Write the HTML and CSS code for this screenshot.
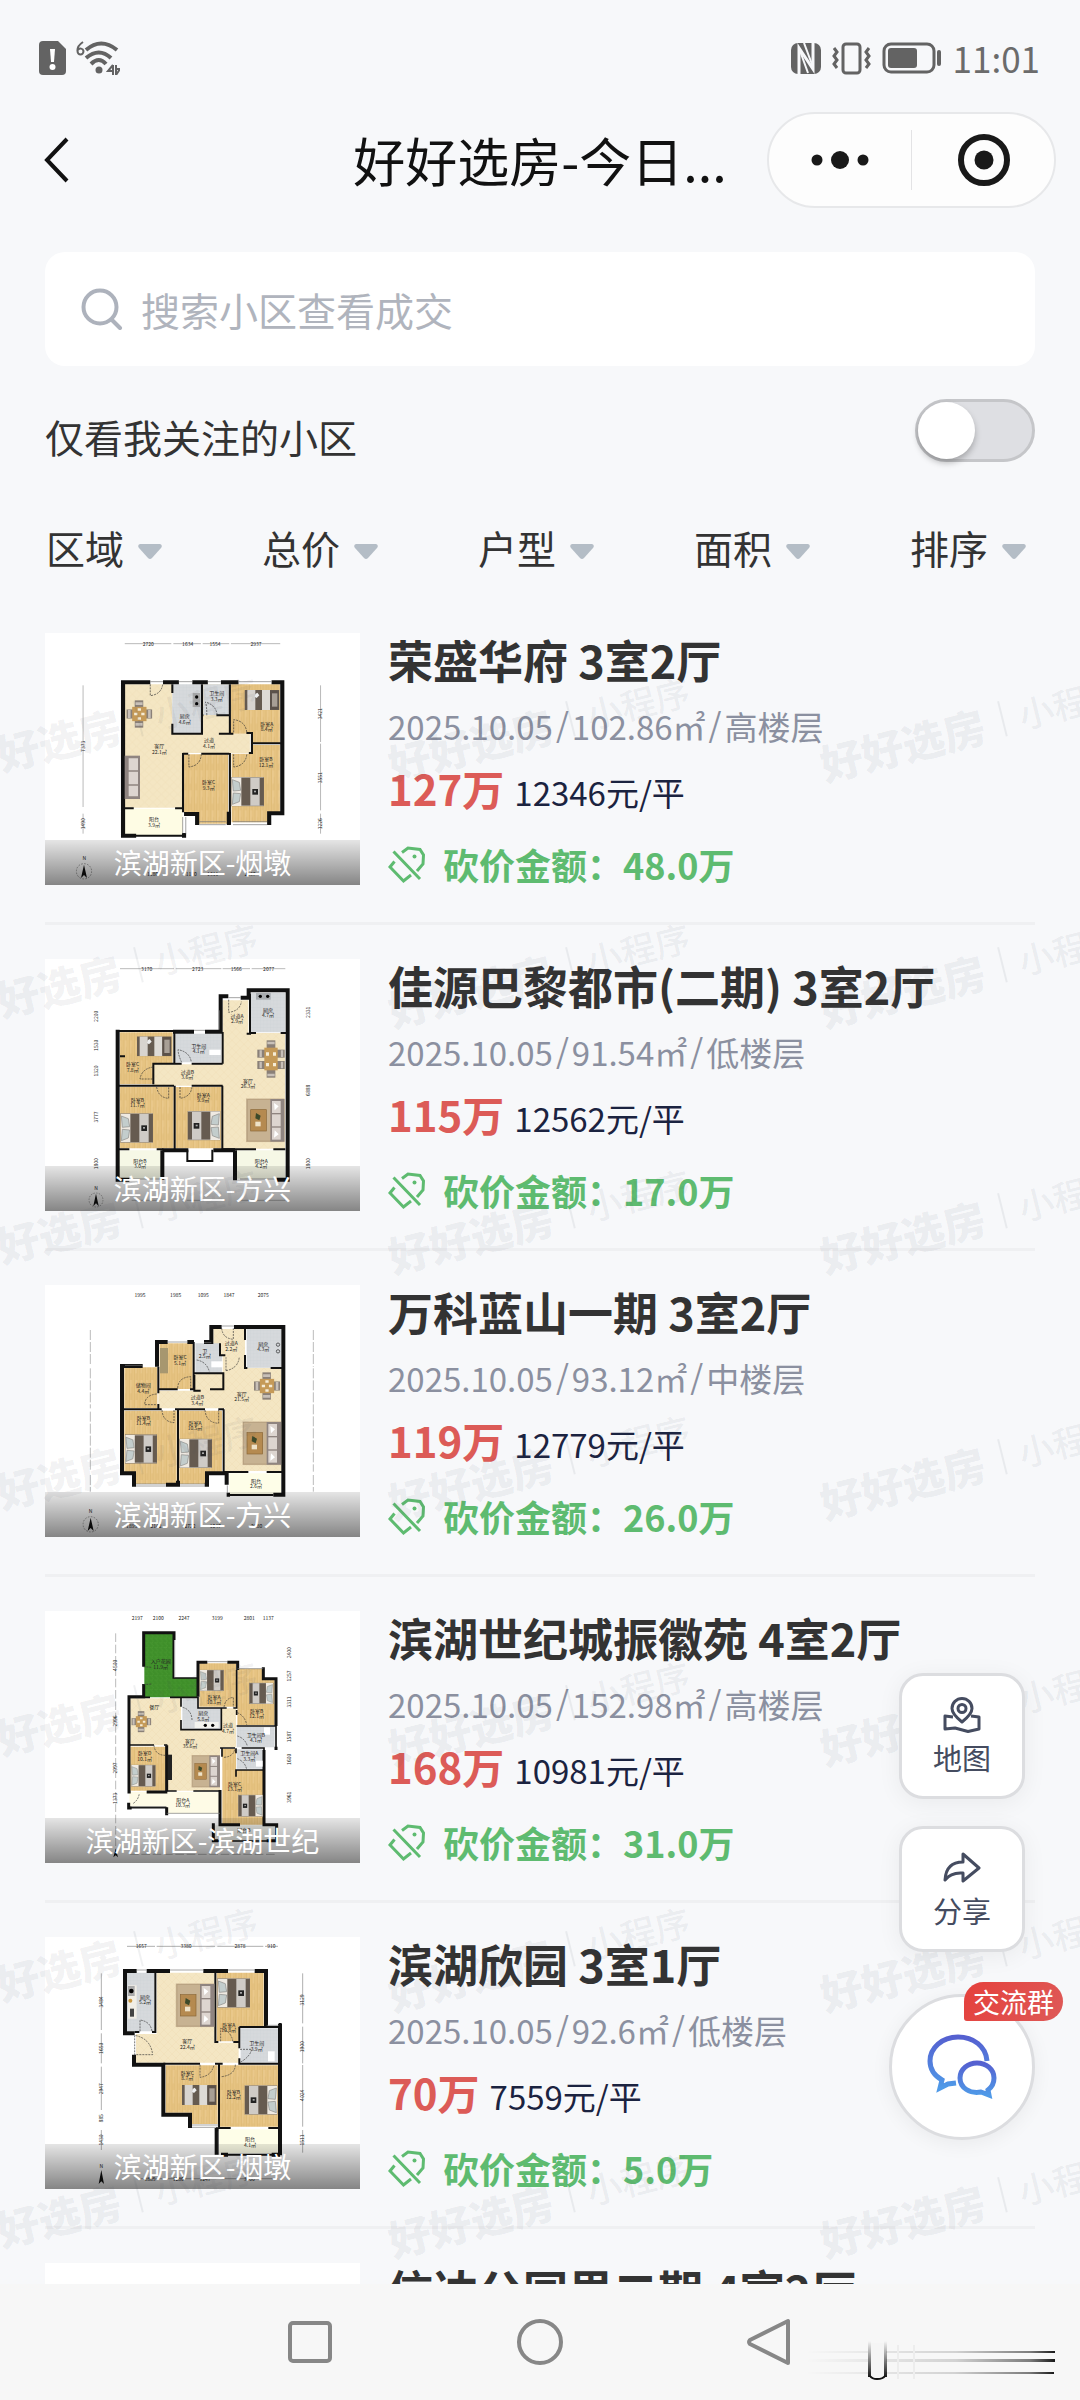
FILE: index.html
```html
<!DOCTYPE html>
<html lang="zh-CN">
<head>
<meta charset="utf-8">
<meta name="viewport" content="width=device-width, initial-scale=1">
<title>好好选房-今日成交</title>
<link rel="stylesheet" href="styles.css">
</head>
<body>
<svg class="defs" width="0" height="0" aria-hidden="true">
  <defs>
    <pattern id="wood" width="16" height="60" patternUnits="userSpaceOnUse"><rect width="16" height="60" fill="#e6c382"/><path d="M4 0V60M11 20V60" stroke="#dab36d" stroke-width="1.5"/><path d="M8 0V40" stroke="#f0d29a" stroke-width="2"/></pattern>
    <pattern id="tile" width="24" height="24" patternUnits="userSpaceOnUse"><rect width="24" height="24" fill="#f4e6c3"/><path d="M0 12L12 0L24 12L12 24Z" fill="none" stroke="#ecdab0" stroke-width="1"/></pattern>
    <pattern id="stone" width="10" height="10" patternUnits="userSpaceOnUse"><rect width="10" height="10" fill="#d6d9dc"/><path d="M0 0H10M0 0V10" stroke="#cbced2" stroke-width="1"/></pattern>
    <pattern id="grass" width="14" height="14" patternUnits="userSpaceOnUse"><rect width="14" height="14" fill="#3f8f2a"/><path d="M2 3L6 7M8 9L12 13M10 2L8 6" stroke="#54a53b" stroke-width="1.5"/></pattern>
    <linearGradient id="chatGrad" x1="0" y1="0" x2="0" y2="1"><stop offset="0" stop-color="#5560d0"/><stop offset="1" stop-color="#4f9ae8"/></linearGradient>
    <linearGradient id="trail" x1="0" y1="0" x2="1" y2="0"><stop offset="0" stop-color="#000" stop-opacity="0"/><stop offset=".6" stop-color="#000" stop-opacity=".15"/><stop offset=".9" stop-color="#000" stop-opacity=".5"/><stop offset="1" stop-color="#000" stop-opacity=".9"/></linearGradient>
    <linearGradient id="post" x1="0" y1="0" x2="0" y2="1"><stop offset="0" stop-color="#000" stop-opacity="0"/><stop offset="1" stop-color="#000" stop-opacity=".9"/></linearGradient>
    <symbol id="bed" viewBox="0 0 98 88"><rect width="98" height="88" fill="#efeae2"/><rect x="30" y="2" width="68" height="84" fill="#665b50"/><rect x="57" y="2" width="28" height="84" fill="#cfcbc6"/><path d="M3 8L24 16L28 40L6 42ZM3 82L24 74L28 50L6 48Z" fill="#c3cdcc" stroke="#8b8a86" stroke-width="2"/><rect x="63" y="36" width="17" height="17" fill="#222"/><rect x="68" y="41" width="6" height="5" fill="#aaa"/><rect width="98" height="88" fill="none" stroke="#75695a" stroke-width="2"/></symbol>
    <symbol id="bedS" viewBox="0 0 104 60"><rect width="104" height="60" fill="#665b50"/><rect x="8" width="24" height="60" fill="#d8d4cf"/><rect x="52" width="24" height="60" fill="#dedbd6"/><rect x="76" y="2" width="26" height="56" fill="#5b5149"/><rect x="82" y="10" width="16" height="40" fill="#a89f95"/><path d="M32 12l6-4 6 8-8 8-6-4z" fill="#eee"/></symbol>
    <symbol id="dining" viewBox="0 0 80 84"><rect x="26" width="26" height="84" fill="#8a8078"/><rect y="28" width="80" height="28" fill="#8a8078"/><path d="M28 10h22M28 74h22M9 30v24M71 30v24" stroke="#c8c0b8" stroke-width="8"/><rect x="18" y="20" width="44" height="44" fill="#c59a58"/><path d="M24 38h10v8H24zM46 38h10v8H46zM35 24h10v8H35zM35 52h10v8H35z" fill="#f5ecd6"/></symbol>
    <symbol id="lounge" viewBox="0 0 116 132"><rect width="116" height="132" fill="#c7b292"/><rect x="4" y="4" width="100" height="124" fill="none" stroke="#b39c7b" stroke-width="2"/><rect x="14" y="34" width="47" height="64" fill="#b58a50" stroke="#8a6637" stroke-width="2"/><path d="M30 44l14 8-4 14-12-6z" fill="#3d4a2a"/><rect x="28" y="70" width="16" height="14" fill="#eee2c8"/><rect x="73" y="2" width="43" height="128" fill="#8f8480"/><rect x="78" y="8" width="26" height="36" fill="#ddd5d0"/><rect x="78" y="48" width="26" height="36" fill="#ddd5d0"/><rect x="78" y="88" width="26" height="36" fill="#ddd5d0"/><path d="M84 14l14 10-12 12zM84 118l14-10-12-12z" fill="#fff"/></symbol>
    <symbol id="compass" viewBox="0 0 50 50"><circle cx="25" cy="25" r="23" fill="none" stroke="#777" stroke-width="2" stroke-dasharray="5 4"/><path d="M25 5L34 45L25 36L16 45Z" fill="#111"/></symbol>
    <symbol id="tag" viewBox="0 0 37 37"><g fill="none" stroke="currentColor" stroke-width="3"><path d="M14 6.500L20 2L32 3.500L35.500 9L35 18L29 25M6.500 15.500L2 21L15.500 35L23 29M5.500 5.500L32 33"/></g><circle cx="26.500" cy="10.500" r="2" fill="currentColor"/></symbol>
  </defs>
</svg>

<div class="app">
  <div class="status">
    <div class="status-group">
      <svg width="27" height="34" viewBox="0 0 27 34" aria-hidden="true"><path d="M4 0H19L27 8V30a4 4 0 0 1-4 4H4a4 4 0 0 1-4-4V4a4 4 0 0 1 4-4z" fill="#636363"/><path d="M11 8h5l-1 13h-3z" fill="#fff"/><circle cx="13.500" cy="26" r="3" fill="#fff"/></svg>
      <svg class="wifi" width="44" height="34" viewBox="0 0 44 34" aria-hidden="true"><path d="M7 1Q1 5 1.500 10a3 3.500 0 1 0 6 0a3 3 0 0 0-5.500-1" fill="none" stroke="#636363" stroke-width="2"/><g fill="none" stroke="#636363" stroke-width="4"><path d="M10 9Q25-4 41 9"/><path d="M10 17Q23 6 35 17"/><path d="M15 23Q23 15 30 23"/></g><circle cx="23" cy="29" r="3.500" fill="#636363"/><path d="M37 24v10M37 24l-5 6h5M40 24v10l4-6h-4" fill="none" stroke="#636363" stroke-width="2"/></svg>
    </div>
    <div class="status-group">
      <svg width="30" height="31" viewBox="0 0 30 31" aria-hidden="true"><rect width="30" height="31" rx="7" fill="#636363"/><path d="M8 31V5L22 26V0" fill="none" stroke="#f7f8fa" stroke-width="3"/><path d="M8 5L17 30M13 0L22 24" stroke="#f7f8fa" stroke-width="2"/></svg>
      <svg class="vibrate" width="39" height="33" viewBox="0 0 39 33" aria-hidden="true"><g fill="none" stroke="#636363" stroke-width="3"><rect x="11" y="2" width="17" height="29" rx="3"/><path d="M2 6l3 4-3 4 3 4-3 4 3 4M37 6l-3 4 3 4-3 4 3 4-3 4"/></g></svg>
      <svg class="battery" width="60" height="32" viewBox="0 0 60 32" aria-hidden="true"><rect x="2" y="2" width="50" height="28" rx="7" fill="none" stroke="#636363" stroke-width="3"/><rect x="6" y="6" width="29" height="20" rx="3" fill="#636363"/><path d="M57 10V22" stroke="#636363" stroke-width="4" stroke-linecap="round"/></svg>
      <span class="clock">11:01</span>
    </div>
  </div>

  <header class="header">
    <button class="back" type="button" aria-label="返回"><svg width="26" height="46" viewBox="0 0 26 46" aria-hidden="true"><path d="M23 2L3 23L23 44" fill="none" stroke="#111" stroke-width="4"/></svg></button>
    <h1 class="title">好好选房-今日...</h1>
    <div class="capsule">
      <button type="button" aria-label="更多"><svg width="60" height="60" viewBox="0 0 60 60" aria-hidden="true"><g fill="#191919"><circle cx="7" cy="30" r="5.500"/><circle cx="30" cy="30" r="9"/><circle cx="53" cy="30" r="5.500"/></g></svg></button>
      <button type="button" aria-label="关闭"><svg width="60" height="60" viewBox="0 0 60 60" aria-hidden="true"><circle cx="31" cy="30" r="23" fill="none" stroke="#191919" stroke-width="6"/><circle cx="31" cy="30" r="9.500" fill="#191919"/></svg></button>
    </div>
  </header>

  <section class="tools">
    <label class="search">
      <svg width="42" height="42" viewBox="0 0 42 42" aria-hidden="true"><circle cx="19" cy="19" r="16.500" fill="none" stroke="#adb2bc" stroke-width="4"/><path d="M31 32L39 40" stroke="#adb2bc" stroke-width="4" stroke-linecap="round"/></svg>
      <input type="text" placeholder="搜索小区查看成交" aria-label="搜索小区查看成交">
    </label>
    <div class="follow">
      <label for="follow">仅看我关注的小区</label>
      <input class="switch" id="follow" type="checkbox">
    </div>
  </section>

  <div class="filters">
    <label class="filter"><select aria-label="区域"><option>区域</option></select><svg width="24" height="15" viewBox="0 0 24 15" aria-hidden="true"><path d="M2 0H22Q25 1 23 4L14 14Q12 16 10 14L1 4Q-1 1 2 0Z" fill="#b4bdc6"/></svg></label>
    <label class="filter"><select aria-label="总价"><option>总价</option></select><svg width="24" height="15" viewBox="0 0 24 15" aria-hidden="true"><path d="M2 0H22Q25 1 23 4L14 14Q12 16 10 14L1 4Q-1 1 2 0Z" fill="#b4bdc6"/></svg></label>
    <label class="filter"><select aria-label="户型"><option>户型</option></select><svg width="24" height="15" viewBox="0 0 24 15" aria-hidden="true"><path d="M2 0H22Q25 1 23 4L14 14Q12 16 10 14L1 4Q-1 1 2 0Z" fill="#b4bdc6"/></svg></label>
    <label class="filter"><select aria-label="面积"><option>面积</option></select><svg width="24" height="15" viewBox="0 0 24 15" aria-hidden="true"><path d="M2 0H22Q25 1 23 4L14 14Q12 16 10 14L1 4Q-1 1 2 0Z" fill="#b4bdc6"/></svg></label>
    <label class="filter"><select aria-label="排序"><option>排序</option></select><svg width="24" height="15" viewBox="0 0 24 15" aria-hidden="true"><path d="M2 0H22Q25 1 23 4L14 14Q12 16 10 14L1 4Q-1 1 2 0Z" fill="#b4bdc6"/></svg></label>
  </div>

  <main class="list">
    <article class="item">
      <div class="thumb">
        <svg class="plan" viewBox="135 68 945 756" aria-hidden="true">
          <g transform="scale(1.034 1)">
            <path d="M362 222H500V370H588V222H665V370H725V428H530V592H362Z" fill="url(#tile)"/>
            <path d="M500 222H584V368H500ZM590 222H664V314H590Z" fill="url(#stone)"/>
            <path d="M670 222H812V398H731V370H670ZM534 432H662V640H572V606H534ZM672 430H731V404H812V606H780V636H672Z" fill="url(#wood)"/>
            <path d="M362 595H530V674H362Z" fill="#fefce4"/>
            <g fill="none" stroke="#111" stroke-width="12"><path d="M395 676H357V216H436M473 216H519M558 216H603M641 216H692M788 216H819V609H781V644M572 644V611H534M664 604V644M534 668V682"/></g>
            <g fill="none" stroke="#111" stroke-width="6"><path d="M500 222V248M500 340V370H586V222M587 315H590M628 315H665M667 222V370H635M665 370H677M715 368H731V428H722M731 399H815M530 430H546M584 430H665M531 428V606M667 428V640M362 594H388M508 594H530M390 676H530"/></g>
            <path d="M436 214H473M519 214H558M603 214H641M692 214H788M578 634H655M578 643H655M676 634H775M676 643H775M530 620V670M539 620V670" stroke="#777" stroke-width="2"/>
            <path d="M436 222V256Q468 252 472 222M600 315Q600 285 596 275Q628 285 630 315M678 366V328Q712 332 716 366M548 432V470Q582 466 584 432M678 432V470Q712 466 716 432" fill="none" stroke="#333" stroke-width="2" stroke-dasharray="6 3"/>
            <path d="M362 100H497M503 100H583M588 100H665M670 100H813M241 225V590M241 610V670M930 225V395M930 400V600M930 610V670" stroke="#999" stroke-width="2"/>
          </g>
          <use href="#dining" x="379" y="268" width="78" height="86"/>
          <g transform="translate(374 436)"><rect width="46" height="130" fill="#8f8480"/><path d="M12 8H40V44H12ZM12 48H40V86H12ZM12 90H40V122H12Z" fill="#ddd5d0"/></g>
          <use href="#bedS" x="733" y="239" width="106" height="60"/>
          <use href="#bed" x="694" y="500" width="98" height="88"/>
          <rect x="578" y="248" width="22" height="42" fill="#aaa"/><circle cx="590" cy="260" r="5"/><circle cx="590" cy="280" r="5"/>
          <g class="plan-text"><text x="445" y="106">2720</text><text x="563" y="106">1634</text><text x="645" y="106">1554</text><text x="768" y="106">2937</text><text x="478" y="412">客厅</text><text x="478" y="430">22.1㎡</text><text x="554" y="322">厨房</text><text x="554" y="340">4.6㎡</text><text x="650" y="254">卫生间</text><text x="650" y="272">3.3㎡</text><text x="627" y="394">过道</text><text x="627" y="412">4.1㎡</text><text x="800" y="346">卧室A</text><text x="800" y="362">8.4㎡</text><text x="798" y="452">卧室B</text><text x="798" y="470">12.1㎡</text><text x="626" y="522">卧室C</text><text x="626" y="540">9.3㎡</text><text x="462" y="632">阳台</text><text x="462" y="650">3.9㎡</text><text x="253" y="750">N</text><text x="458" y="796">1180</text><text x="574" y="796">1180</text><text x="638" y="796">1311</text><text x="750" y="796">2137</text></g>
          <g class="plan-text"><text transform="translate(254 408) rotate(-90)">7373</text><text transform="translate(254 640) rotate(-90)">1490</text><text transform="translate(967 310) rotate(-90)">3421</text><text transform="translate(967 502) rotate(-90)">3551</text><text transform="translate(967 640) rotate(-90)">1226</text></g>
          <use href="#compass" x="227" y="758" width="50" height="50"/>
        </svg>
        <span class="district">滨湖新区-烟墩</span>
      </div>
      <div class="info">
        <h2 class="name">荣盛华府 3室2厅</h2>
        <p class="meta"><span>2025.10.05</span><i>/</i><span>102.86㎡</span><i>/</i><span>高楼层</span></p>
        <p class="price"><strong>127万</strong><span>12346元/平</span></p>
        <p class="bargain"><svg width="37" height="37" aria-hidden="true"><use href="#tag"/></svg><span>砍价金额：48.0万</span></p>
      </div>
    </article>

    <article class="item">
      <div class="thumb">
        <svg class="plan" viewBox="135 56 945 756" aria-hidden="true">
          <path d="M668 180H745V278H855V625H668V436H460V372H668Z" fill="url(#tile)"/>
          <path d="M752 157H855V276H752ZM525 280H664V366H525Z" fill="url(#stone)"/>
          <path d="M360 276H518V368H460V432H360ZM360 440H521V624H360ZM527 440H664V624H527Z" fill="url(#wood)"/>
          <path d="M357 630H484V715H357ZM710 630H856V715H710Z" fill="#f6f8e6"/>
          <g fill="none" stroke="#111" stroke-width="12"><path d="M388 718H353V268M519 274H582M615 274H668M662 275V168H685M722 172H746V150H863V718H830M487 630V718M705 630V720M487 630H565M640 630H705"/></g>
          <g fill="none" stroke="#111" stroke-width="6"><path d="M353 272H520M523 275V368M668 275V370M457 370H545M575 370H668M460 370V432M355 436H522M575 436H668M524 436V628M667 436V628M355 627H388M470 627H490M750 160V280H740M750 278H768M842 278H858M562 628V662H637V628M360 348H375M668 627H768M820 627H856"/></g>
          <path d="M582 270H615M685 172H722M390 716H480M720 716H830M658 210V268" stroke="#777" stroke-width="2"/>
          <path d="M686 178V216Q720 212 724 184M545 366Q535 345 534 328Q570 335 574 366M460 380Q425 385 420 416H458M470 440Q475 472 506 474V440M540 440V474Q572 470 576 440" fill="none" stroke="#333" stroke-width="2" stroke-dasharray="6 3"/>
          <path d="M360 85H522M527 85H664M668 85H750M755 85H856M395 780H480M560 780H660M720 780H856" stroke="#999" stroke-width="2"/>
          <use href="#bedS" x="411" y="288" width="104" height="60"/>
          <use href="#bed" x="361" y="519" width="98" height="88"/>
          <use href="#bed" transform="translate(661 512) scale(-1 1)" width="98" height="88"/>
          <g fill="#8a8078"><rect x="800" y="300" width="26" height="112"/><rect x="772" y="328" width="82" height="24"/><rect x="772" y="362" width="82" height="24"/></g>
          <path d="M782 330v20M782 364v20M846 330v20M846 364v20M802 308h22M802 404h22" stroke="#c8c0b8" stroke-width="7"/>
          <rect x="793" y="322" width="40" height="68" fill="#c59a58"/><path d="M798 336h9v10h-9zM819 336h9v10h-9zM798 368h9v10h-9zM819 368h9v10h-9z" fill="#f5ecd6"/>
          <use href="#lounge" x="738" y="474" width="116" height="132"/>
          <rect x="628" y="328" width="34" height="16" fill="#fff"/><rect x="768" y="158" width="44" height="20" fill="#a8acb0"/><circle cx="781" cy="168" r="5"/><circle cx="803" cy="168" r="5"/>
          <g class="plan-text"><text x="440" y="91">3170</text><text x="593" y="91">2723</text><text x="709" y="91">1566</text><text x="806" y="91">2077</text><text x="711" y="232">过道A</text><text x="711" y="248">2.9㎡</text><text x="804" y="214">厨房</text><text x="804" y="230">4.7㎡</text><text x="596" y="322">卫生间</text><text x="596" y="338">4.1㎡</text><text x="398" y="378">卧室C</text><text x="398" y="394">7.8㎡</text><text x="562" y="400">过道B</text><text x="562" y="416">3.6㎡</text><text x="744" y="428">客厅</text><text x="744" y="444">26.3㎡</text><text x="412" y="484">卧室B</text><text x="412" y="500">11.7㎡</text><text x="610" y="470">卧室A</text><text x="610" y="486">9.9㎡</text><text x="420" y="668">阳台B</text><text x="420" y="684">3.0㎡</text><text x="784" y="668">阳台A</text><text x="784" y="684">4.2㎡</text><text x="288" y="750">N</text></g>
          <g class="plan-text"><text transform="translate(293 228) rotate(-90)">2200</text><text transform="translate(293 315) rotate(-90)">1530</text><text transform="translate(293 392) rotate(-90)">1320</text><text transform="translate(293 530) rotate(-90)">3777</text><text transform="translate(293 670) rotate(-90)">1800</text><text transform="translate(930 216) rotate(-90)">2331</text><text transform="translate(930 450) rotate(-90)">6888</text><text transform="translate(930 670) rotate(-90)">1800</text></g>
          <use href="#compass" x="265" y="756" width="46" height="46"/>
        </svg>
        <span class="district">滨湖新区-方兴</span>
      </div>
      <div class="info">
        <h2 class="name">佳源巴黎都市(二期) 3室2厅</h2>
        <p class="meta"><span>2025.10.05</span><i>/</i><span>91.54㎡</span><i>/</i><span>低楼层</span></p>
        <p class="price"><strong>115万</strong><span>12562元/平</span></p>
        <p class="bargain"><svg width="37" height="37" aria-hidden="true"><use href="#tag"/></svg><span>砍价金额：17.0万</span></p>
      </div>
    </article>

    <article class="item">
      <div class="thumb">
        <svg class="plan" viewBox="135 75 945 756" aria-hidden="true">
          <path d="M640 207H735V323H845V633H674V445H475V392H584V340H668V285H640Z" fill="url(#tile)"/>
          <path d="M740 207H843V323H740ZM586 250H660V285H666V338H586Z" fill="url(#stone)"/>
          <path d="M373 322H472V444H373ZM479 250H578V387H479ZM373 452H530V672H405V636H373ZM538 452H666V636H618V672H538Z" fill="url(#wood)"/>
          <path d="M688 640H843V702H688Z" fill="#fefee8"/>
          <g fill="none" stroke="#111" stroke-width="12"><path d="M428 318H366V640H402V674H408M498 674H534V662M614 674H621V640H680V674M680 704H690M820 704H850V201H702M665 201H634V246H612M582 246H562M503 246H471V320"/></g>
          <g fill="none" stroke="#111" stroke-width="6"><path d="M475 320V400M475 388H533M570 388H581V246M583 340H670V388H630M583 345V392H602M660 250V286H676M735 207V240M735 285V324H742M812 324H846M475 432V448M366 448H485M525 448H615M655 448H672M534 448V670M671 448V640M672 636H745M800 636H846M690 705H820"/></g>
          <path d="M375 316H428M503 246H562M612 248H634M665 198H702M408 672H498M408 678H498M540 672H614M540 678H614M682 676V700" stroke="#777" stroke-width="2"/>
          <path d="M665 205Q668 235 700 238V205M678 332V292M678 332Q715 325 718 290M533 384Q535 352 572 350V384M590 300Q620 305 628 335M470 402Q435 405 434 434H470M486 450Q488 485 522 488V450M615 450Q618 488 656 490V450" fill="none" stroke="#333" stroke-width="2" stroke-dasharray="6 3"/>
          <path d="M271 210V315M271 325V445M271 455V635M271 645V695M940 210V320M940 325V635M940 645V695" stroke="#999" stroke-width="2" stroke-dasharray="30 6"/>
          <use href="#bed" x="375" y="523" width="96" height="88"/>
          <use href="#bed" x="538" y="536" width="98" height="88"/>
          <use href="#dining" x="762" y="336" width="78" height="84"/>
          <use href="#lounge" x="727" y="484" width="116" height="132"/>
          <rect x="480" y="264" width="24" height="76" fill="#a7976f"/><rect x="634" y="304" width="34" height="18" fill="#fff"/><circle cx="834" cy="254" r="5" fill="none" stroke="#222" stroke-width="2"/><circle cx="834" cy="274" r="5" fill="none" stroke="#222" stroke-width="2"/>
          <g class="plan-text"><text x="420" y="110">1995</text><text x="527" y="110">1985</text><text x="610" y="110">1095</text><text x="687" y="110">1847</text><text x="790" y="110">2075</text><text x="540" y="298">卧室C</text><text x="540" y="314">5.1㎡</text><text x="614" y="278">卫</text><text x="614" y="294">2.5㎡</text><text x="694" y="256">过道A</text><text x="694" y="272">2.2㎡</text><text x="790" y="258">厨房</text><text x="790" y="274">4.3㎡</text><text x="430" y="382">储物间</text><text x="430" y="398">4.4㎡</text><text x="592" y="418">过道B</text><text x="592" y="434">3.4㎡</text><text x="725" y="408">客厅</text><text x="725" y="424">21.5㎡</text><text x="430" y="480">卧室B</text><text x="430" y="496">11.4㎡</text><text x="585" y="494">卧室A</text><text x="585" y="510">10.5㎡</text><text x="768" y="668">阳台</text><text x="768" y="684">2.6㎡</text><text x="272" y="760">N</text><text x="395" y="803">1895</text><text x="468" y="803">2142</text><text x="570" y="803">2722</text><text x="646" y="803">1047</text><text x="770" y="803">2880</text></g>
          <use href="#compass" x="247" y="768" width="50" height="50"/>
        </svg>
        <span class="district">滨湖新区-方兴</span>
      </div>
      <div class="info">
        <h2 class="name">万科蓝山一期 3室2厅</h2>
        <p class="meta"><span>2025.10.05</span><i>/</i><span>93.12㎡</span><i>/</i><span>中楼层</span></p>
        <p class="price"><strong>119万</strong><span>12779元/平</span></p>
        <p class="bargain"><svg width="37" height="37" aria-hidden="true"><use href="#tag"/></svg><span>砍价金额：26.0万</span></p>
      </div>
    </article>

    <article class="item">
      <div class="thumb">
        <svg class="plan" viewBox="135 63 945 756" aria-hidden="true">
          <path d="M433 130H521V264H592V322H433Z" fill="url(#grass)"/>
          <path d="M391 325H543V418H664V355H708V472H660V602H502V466H391Z" fill="url(#tile)"/>
          <path d="M547 325H592V355H662V416H547ZM710 410H824V472H710ZM710 478H790V536H710Z" fill="url(#stone)"/>
          <path d="M598 220H708V350H598ZM712 236H790V266H824V405H712ZM391 470H498V602H391ZM667 476H708V540H790V704H667Z" fill="url(#wood)"/>
          <path d="M388 606H660V670H502V650H388Z" fill="#fefbe6"/><path d="M640 706H828V752H640Z" fill="#eef0ea"/>
          <g fill="none" stroke="#111" stroke-width="9"><path d="M431 230V128H522V150M431 282V320H387V606H392M594 320V217H622M682 217H713V240M790 232V266H828V408M828 470V480M792 480V704M792 540V704H830V752H800M660 600V704H720M502 606H440M500 652V676M386 638V654H395M640 700V752H655M500 466V604"/></g>
          <g fill="none" stroke="#111" stroke-width="5"><path d="M520 150V264H592M594 320V354H680M710 240V354H700M386 322H450M510 322H592M543 325V350M543 390V419H664V355M388 465H462M492 465H502M710 408H828V475M660 474H705M725 474H792V540H708V560M708 475V490M500 603H530M580 603H660M390 653H500M645 753H820M666 474V500M710 360V375"/></g>
          <path d="M622 215H682M713 236H790M500 670H660M524 150V262M395 650H498" stroke="#777" stroke-width="2"/>
          <path d="M430 230L456 232M430 284L456 282M462 466Q465 495 495 496M548 352Q575 360 576 390M672 352Q675 325 700 322V352M712 438Q735 445 742 468M672 502Q700 500 704 478M712 506Q735 515 740 538M712 368Q735 378 740 404M400 640Q415 630 418 610" fill="none" stroke="#333" stroke-width="2" stroke-dasharray="6 3"/>
          <path d="M390 793H828M347 130V790" stroke="#999" stroke-width="2" stroke-dasharray="26 8"/>
          <use href="#bed" x="598" y="239" width="74" height="64"/>
          <use href="#bed" transform="translate(822 278) scale(-1 1)" width="76" height="64"/>
          <use href="#bed" x="393" y="524" width="74" height="66"/>
          <use href="#bed" transform="translate(790 614) scale(-1 1)" width="76" height="66"/>
          <use href="#dining" x="394" y="352" width="60" height="86"/>
          <use href="#lounge" x="574" y="495" width="86" height="98"/>
          <rect x="503" y="494" width="13" height="76" fill="#222"/><rect x="584" y="396" width="72" height="18" fill="#f3f3ee"/><circle cx="616" cy="406" r="5"/><circle cx="638" cy="406" r="5"/><rect x="792" y="412" width="18" height="22" fill="#fff"/><rect x="768" y="512" width="20" height="18" fill="#fff"/>
          <g class="plan-text"><text x="412" y="91">2197</text><text x="475" y="91">2100</text><text x="552" y="91">2247</text><text x="652" y="91">3199</text><text x="748" y="91">2801</text><text x="805" y="91">1137</text><text x="482" y="220">入户花园</text><text x="482" y="236">11.9㎡</text><text x="642" y="326">卧室A</text><text x="642" y="342">10.1㎡</text><text x="770" y="368">卧室B</text><text x="770" y="384">12.1㎡</text><text x="610" y="376">厨房</text><text x="610" y="392">5.8㎡</text><text x="463" y="356">餐厅</text><text x="684" y="412">过道</text><text x="684" y="428">4.7㎡</text><text x="768" y="440">卫生间B</text><text x="768" y="456">4.1㎡</text><text x="570" y="458">客厅</text><text x="570" y="474">35.6㎡</text><text x="748" y="496">卫生间A</text><text x="748" y="512">3.3㎡</text><text x="434" y="496">卧室D</text><text x="434" y="512">10.1㎡</text><text x="704" y="588">卧室C</text><text x="704" y="604">13.1㎡</text><text x="548" y="636">阳台A</text><text x="548" y="652">10.3㎡</text><text x="732" y="726">阳台B</text></g>
          <g class="plan-text"><text transform="translate(352 226) rotate(-90)">4500</text><text transform="translate(352 393) rotate(-90)">2996</text><text transform="translate(352 534) rotate(-90)">2997</text><text transform="translate(352 625) rotate(-90)">1373</text><text transform="translate(873 188) rotate(-90)">2400</text><text transform="translate(873 258) rotate(-90)">1257</text><text transform="translate(873 336) rotate(-90)">3311</text><text transform="translate(873 440) rotate(-90)">1587</text><text transform="translate(873 508) rotate(-90)">1600</text><text transform="translate(873 622) rotate(-90)">3961</text></g>
          <path d="M347 776l7 26-7-6-7 6z" fill="#111"/>
        </svg>
        <span class="district">滨湖新区-滨湖世纪</span>
      </div>
      <div class="info">
        <h2 class="name">滨湖世纪城振徽苑 4室2厅</h2>
        <p class="meta"><span>2025.10.05</span><i>/</i><span>152.98㎡</span><i>/</i><span>高楼层</span></p>
        <p class="price"><strong>168万</strong><span>10981元/平</span></p>
        <p class="bargain"><svg width="37" height="37" aria-hidden="true"><use href="#tag"/></svg><span>砍价金额：31.0万</span></p>
      </div>
    </article>

    <article class="item">
      <div class="thumb">
        <svg class="plan" viewBox="135 81 945 756" aria-hidden="true">
          <path d="M470 188H643V398H716V458H408V372H470Z" fill="url(#tile)"/>
          <path d="M381 188H463V364H381ZM722 355H834V458H722Z" fill="url(#stone)"/>
          <path d="M650 188H791V348H716V394H650ZM497 466H653V642H576V608H497ZM660 466H834V650H660Z" fill="url(#wood)"/>
          <path d="M658 658H834V730H658Z" fill="#fefee8"/>
          <g fill="none" stroke="#111" stroke-width="12"><path d="M410 183H375V370H404M440 183H510M610 183H684M764 183H798V350M402 434V464H490V614H570V654M840 342V736M663 734H684M650 654V734M840 734H815"/></g>
          <g fill="none" stroke="#111" stroke-width="6"><path d="M466 186V366H456M404 366H418M646 186V396H655M700 396H718V415M718 350V396M718 351H836M718 445V461H838M645 461H668M490 461H600M657 461V656M648 654H692M805 654H838M684 734H820M836 342H845"/></g>
          <path d="M410 180H440M510 180H610M684 180H764M576 645H655M576 652H655M655 664V728M800 346H836" stroke="#777" stroke-width="2"/>
          <path d="M404 376V434H458Q452 385 404 376M420 364V330Q452 335 456 364M662 394V355Q695 365 698 394M720 418H755Q750 440 722 456M600 464V502Q635 498 642 464M665 500Q705 495 706 464" fill="none" stroke="#333" stroke-width="2" stroke-dasharray="6 3"/>
          <path d="M381 109H465M470 109H645M652 109H790M795 109H834M304 190V360M304 370V460M304 470V600M304 660V720M908 190V340M908 350V460M908 465V650M908 660V728M410 806H490M500 806H650M665 806H834" stroke="#888" stroke-width="2"/>
          <use href="#lounge" x="526" y="220" width="118" height="132"/>
          <use href="#bed" x="652" y="205" width="98" height="88"/>
          <use href="#bed" transform="translate(832 526) scale(-1 1)" width="98" height="88"/>
          <use href="#bedS" x="546" y="525" width="104" height="60"/>
          <rect x="384" y="226" width="26" height="100" fill="#f1eee6"/><path d="M384 228h20v30h-20z" fill="#aaa"/><circle cx="394" cy="243" r="7"/><circle cx="391" cy="272" r="6" fill="#c9973f"/><path d="M390 296h12v24h-12z" fill="#444"/><rect x="804" y="424" width="20" height="30" fill="#fff"/>
          <g class="plan-text"><text x="424" y="115">1657</text><text x="558" y="115">3380</text><text x="720" y="115">2878</text><text x="814" y="115">910</text><text x="435" y="266">厨房</text><text x="435" y="282">5.2㎡</text><text x="562" y="400">客厅</text><text x="562" y="416">22.4㎡</text><text x="686" y="350">卧室A</text><text x="686" y="366">10.8㎡</text><text x="770" y="406">卫生间</text><text x="770" y="422">3.9㎡</text><text x="562" y="494">卧室C</text><text x="562" y="510">8.7㎡</text><text x="700" y="552">卧室B</text><text x="700" y="568">12.2㎡</text><text x="750" y="694">阳台</text><text x="750" y="710">4.1㎡</text><text x="304" y="774">N</text><text x="450" y="812">1885</text><text x="535" y="812">1280</text><text x="615" y="812">1247</text><text x="748" y="812">3400</text></g>
          <g class="plan-text"><text transform="translate(309 276) rotate(-90)">3484</text><text transform="translate(309 415) rotate(-90)">1650</text><text transform="translate(309 536) rotate(-90)">2947</text><text transform="translate(309 625) rotate(-90)">885</text><text transform="translate(309 690) rotate(-90)">1430</text><text transform="translate(913 270) rotate(-90)">3129</text><text transform="translate(913 410) rotate(-90)">1900</text><text transform="translate(913 556) rotate(-90)">4024</text><text transform="translate(913 690) rotate(-90)">1511</text></g>
          <path d="M304 780l8 42-8-8-8 8z" fill="#111"/>
        </svg>
        <span class="district">滨湖新区-烟墩</span>
      </div>
      <div class="info">
        <h2 class="name">滨湖欣园 3室1厅</h2>
        <p class="meta"><span>2025.10.05</span><i>/</i><span>92.6㎡</span><i>/</i><span>低楼层</span></p>
        <p class="price"><strong>70万</strong><span>7559元/平</span></p>
        <p class="bargain"><svg width="37" height="37" aria-hidden="true"><use href="#tag"/></svg><span>砍价金额：5.0万</span></p>
      </div>
    </article>

    <article class="item">
      <div class="thumb"></div>
      <div class="info">
        <h2 class="name">信达公园里二期 4室2厅</h2>
      </div>
    </article>

    <div class="watermarks" aria-hidden="true">
      <span><b>好好选房</b>小程序</span><span><b>好好选房</b>小程序</span><span><b>好好选房</b>小程序</span>
      <span><b>好好选房</b>小程序</span><span><b>好好选房</b>小程序</span><span><b>好好选房</b>小程序</span>
      <span><b>好好选房</b>小程序</span><span><b>好好选房</b>小程序</span><span><b>好好选房</b>小程序</span>
      <span><b>好好选房</b>小程序</span><span><b>好好选房</b>小程序</span><span><b>好好选房</b>小程序</span>
      <span><b>好好选房</b>小程序</span><span><b>好好选房</b>小程序</span><span><b>好好选房</b>小程序</span>
      <span><b>好好选房</b>小程序</span><span><b>好好选房</b>小程序</span><span><b>好好选房</b>小程序</span>
      <span><b>好好选房</b>小程序</span><span><b>好好选房</b>小程序</span><span><b>好好选房</b>小程序</span>
    </div>

    <div class="floating">
      <button class="tile" type="button"><svg width="38" height="36" viewBox="0 0 38 36" aria-hidden="true"><g fill="none" stroke="#454c60" stroke-width="3" stroke-linejoin="round"><path d="M19 25Q9 17 9 11.500A10 10 0 0 1 29 11.500Q29 17 19 25Z"/><circle cx="19" cy="11.500" r="4"/><path d="M10 20L2 19V32L12 31L25 34.500L36 32V20L28 19"/></g></svg>地图</button>
      <button class="tile" type="button"><svg width="38" height="36" viewBox="0 0 38 36" aria-hidden="true"><path d="M20 4L36 18L20 31V23Q8 22 2 30Q3 12 20 12Z" fill="none" stroke="#454c60" stroke-width="3" stroke-linejoin="round"/></svg>分享</button>
      <button class="group" type="button"><svg width="70" height="66" viewBox="0 0 70 66" aria-hidden="true"><g fill="none" stroke="url(#chatGrad)" stroke-width="5"><path d="M60 27C59 12 46 3 31 3C15 3 3 14 3 27C3 36 8 42 15 46L13 54L21 50L29 49"/><path d="M50 29C59 29 67 35 67 44C67 50 65 53 61 56L62 61L54 58C43 60 33 54 33 44C33 35 41 29 50 29Z"/></g></svg><span class="badge">交流群</span></button>
    </div>
  </main>

  <nav class="sysnav">
    <button type="button" aria-label="最近任务"><svg width="50" height="50" viewBox="0 0 50 50" aria-hidden="true"><rect x="5" y="6" width="40" height="38" rx="3" fill="none" stroke="#878787" stroke-width="4"/></svg></button>
    <button type="button" aria-label="主页"><svg width="50" height="50" viewBox="0 0 50 50" aria-hidden="true"><circle cx="25" cy="25" r="21" fill="none" stroke="#878787" stroke-width="4"/></svg></button>
    <button type="button" aria-label="返回"><svg width="50" height="50" viewBox="0 0 50 50" aria-hidden="true"><path d="M43 4V46L5 27Q3 25 5 23Z" fill="none" stroke="#878787" stroke-width="4" stroke-linejoin="round"/></svg></button>
    <svg class="smear" width="250" height="40" viewBox="0 0 250 40" aria-hidden="true"><g fill="url(#trail)"><rect y="10" width="249" height="2"/><rect y="18" width="249" height="3"/><rect y="31" width="248" height="2"/></g><rect x="62" y="2" width="18" height="34" fill="#f5f5f5"/><rect x="62" width="3" height="36" fill="url(#post)"/><rect x="78" width="3" height="36" fill="url(#post)"/><path d="M64 35Q66 38 71 38Q77 38 79 35" fill="none" stroke="#111" stroke-width="2"/><path d="M92 4V38M108 4V38" stroke="#ededed" stroke-width="2"/></svg>
  </nav>
</div>
</body>
</html>
```

FILE: styles.css
```css
* {
  box-sizing: border-box;
}

body {
  margin: 0;
  background: #f7f8fa;
  color: #333;
  font-family: "Noto Sans CJK SC", sans-serif;
}

h1, h2, p {
  margin: 0;
}

button, select, input {
  padding: 0;
  border: 0;
  background: none;
  color: inherit;
  font: inherit;
}

svg {
  display: block;
  flex: none;
}

.defs {
  position: absolute;
}

.app {
  display: flex;
  flex-direction: column;
  height: 100vh;
  overflow: hidden;
}

/* Status bar */
.status {
  display: flex;
  justify-content: space-between;
  align-items: center;
  height: 112px;
  padding: 4px 40px 0 39px;
}

.status-group {
  display: flex;
  align-items: center;
}

.wifi {
  margin-left: 10px;
}

.vibrate {
  margin-left: 11px;
}

.battery {
  margin-left: 11px;
}

.clock {
  margin-left: 11px;
  color: #6b6b6b;
  font-size: 35px;
  line-height: 40px;
}

/* Title bar */
.header {
  display: grid;
  grid-template-columns: 1fr auto 1fr;
  align-items: center;
  height: 96px;
  padding: 0 24px;
}

.back {
  justify-self: start;
  margin-left: 20px;
}

.title {
  color: #111;
  font-size: 52px;
  font-weight: 400;
  line-height: 72px;
}

.capsule {
  display: flex;
  justify-self: end;
  align-items: center;
  width: 289px;
  height: 96px;
  border: 2px solid #e7e8ea;
  border-radius: 48px;
  background: #fdfdfd;
}

.capsule button {
  display: flex;
  flex: 1;
  justify-content: center;
}

.capsule button + button {
  border-left: 1px solid #e3e3e5;
}

/* Search and follow switch */
.tools {
  padding: 44px 45px 0;
}

.search {
  display: flex;
  align-items: center;
  gap: 18px;
  height: 114px;
  padding: 0 36px;
  border-radius: 20px;
  background: #fff;
}

.search input {
  flex: 1;
  min-width: 0;
  font-size: 39px;
  line-height: 56px;
  outline: 0;
}

.search input::placeholder {
  color: #b0b4bd;
  opacity: 1;
}

.follow {
  display: flex;
  justify-content: space-between;
  align-items: flex-end;
  height: 63px;
  margin-top: 33px;
  font-size: 39px;
  line-height: 52px;
}

.switch {
  width: 120px;
  height: 63px;
  margin: 0;
  border: 3px solid #c5c6c9;
  border-radius: 32px;
  background: #dedfe3;
  appearance: none;
}

.switch::before {
  content: "";
  display: block;
  width: 57px;
  height: 57px;
  border-radius: 50%;
  background: #fff;
  box-shadow: 0 4px 6px rgba(0, 0, 0, 0.25);
}

.switch:checked::before {
  margin-left: auto;
}

/* Filters */
.filters {
  display: flex;
  margin-top: 57px;
}

.filter {
  display: flex;
  flex: 1;
  justify-content: center;
  align-items: center;
  gap: 13px;
  height: 56px;
  padding-right: 8px;
}

.filter select {
  font-size: 39px;
  line-height: 56px;
  appearance: none;
}

.filter svg {
  margin-top: 8px;
}

/* Listing */
.list {
  position: relative;
  flex: 1;
  min-height: 0;
  padding: 58px 45px 0;
  overflow: hidden;
}

.item {
  display: flex;
  gap: 28px;
  height: 292px;
  margin-bottom: 34px;
  padding-bottom: 37px;
  border-bottom: 3px solid #eff0f2;
}

.thumb {
  position: relative;
  flex: none;
  width: 315px;
  height: 252px;
  background: #fff;
}

.plan {
  width: 100%;
  height: 100%;
}

.plan-text {
  fill: #222;
  font-size: 15px;
  text-anchor: middle;
}

.district {
  position: absolute;
  right: 0;
  bottom: 0;
  left: 0;
  background: linear-gradient(rgba(0, 0, 0, 0.1), rgba(0, 0, 0, 0.48));
  color: #fff;
  font-size: 28px;
  line-height: 45px;
  text-align: center;
}

.info {
  flex: 1;
  min-width: 0;
  white-space: nowrap;
}

.name {
  font-size: 45px;
  font-weight: 700;
  line-height: 54px;
}

.meta {
  display: flex;
  gap: 3px;
  margin-top: 15px;
  color: #8b90a0;
  font-size: 33px;
  line-height: 48px;
}

.meta i {
  font-style: normal;
  line-height: 42px;
}

.price {
  display: flex;
  align-items: baseline;
  gap: 10px;
  margin-top: 10px;
  color: #1b2340;
  font-size: 33px;
  line-height: 56px;
}

.price strong {
  color: #dc5b57;
  font-size: 42px;
}

.bargain {
  display: flex;
  align-items: center;
  gap: 18px;
  margin-top: 26px;
  color: #5ebb70;
  font-size: 36px;
  font-weight: 700;
  line-height: 37px;
}

/* Repeating diagonal brand mark */
.watermarks {
  position: absolute;
  inset: 0;
  display: grid;
  grid-template-columns: repeat(3, 432px);
  grid-auto-rows: 246px;
  margin-left: -43px;
  padding-top: 164px;
  color: rgba(70, 75, 90, 0.08);
  font-size: 35px;
  line-height: 50px;
  white-space: nowrap;
  pointer-events: none;
}

.watermarks span {
  display: flex;
  align-items: center;
  align-self: start;
  font-weight: 500;
  transform: rotate(-14deg);
  transform-origin: left center;
}

.watermarks b {
  margin-right: 16px;
  padding-right: 18px;
  border-right: 2px solid rgba(70, 75, 90, 0.08);
  font-size: 42px;
  font-weight: 900;
  line-height: 36px;
}

/* Floating actions */
.floating {
  position: absolute;
  right: 45px;
  bottom: 144px;
  display: flex;
  flex-direction: column;
  align-items: center;
}

.tile {
  display: flex;
  flex-direction: column;
  align-items: center;
  justify-content: center;
  gap: 4px;
  width: 126px;
  height: 126px;
  margin-bottom: 27px;
  padding-top: 2px;
  border: 3px solid #dcdde0;
  border-radius: 24px;
  background: #fff;
  box-shadow: 0 4px 24px rgba(0, 0, 0, 0.06);
  color: #454c60;
  font-size: 29px;
  line-height: 40px;
}

.group {
  position: relative;
  display: flex;
  align-items: center;
  justify-content: center;
  width: 146px;
  height: 146px;
  margin-top: 15px;
  border: 3px solid #dcdde0;
  border-radius: 50%;
  background: #fff;
  box-shadow: 0 4px 20px rgba(0, 0, 0, 0.06);
}

.badge {
  position: absolute;
  top: -15px;
  right: -31px;
  width: 99px;
  border-radius: 20px 20px 20px 3px;
  background: linear-gradient(120deg, #e5403c, #de5a58);
  color: #fff;
  font-size: 27px;
  line-height: 39px;
  text-align: center;
}

/* System navigation */
.sysnav {
  position: relative;
  display: flex;
  justify-content: center;
  align-items: center;
  gap: 180px;
  height: 116px;
  background: #f7f7f7;
}

.smear {
  position: absolute;
  right: 24px;
  bottom: 19px;
}
```
